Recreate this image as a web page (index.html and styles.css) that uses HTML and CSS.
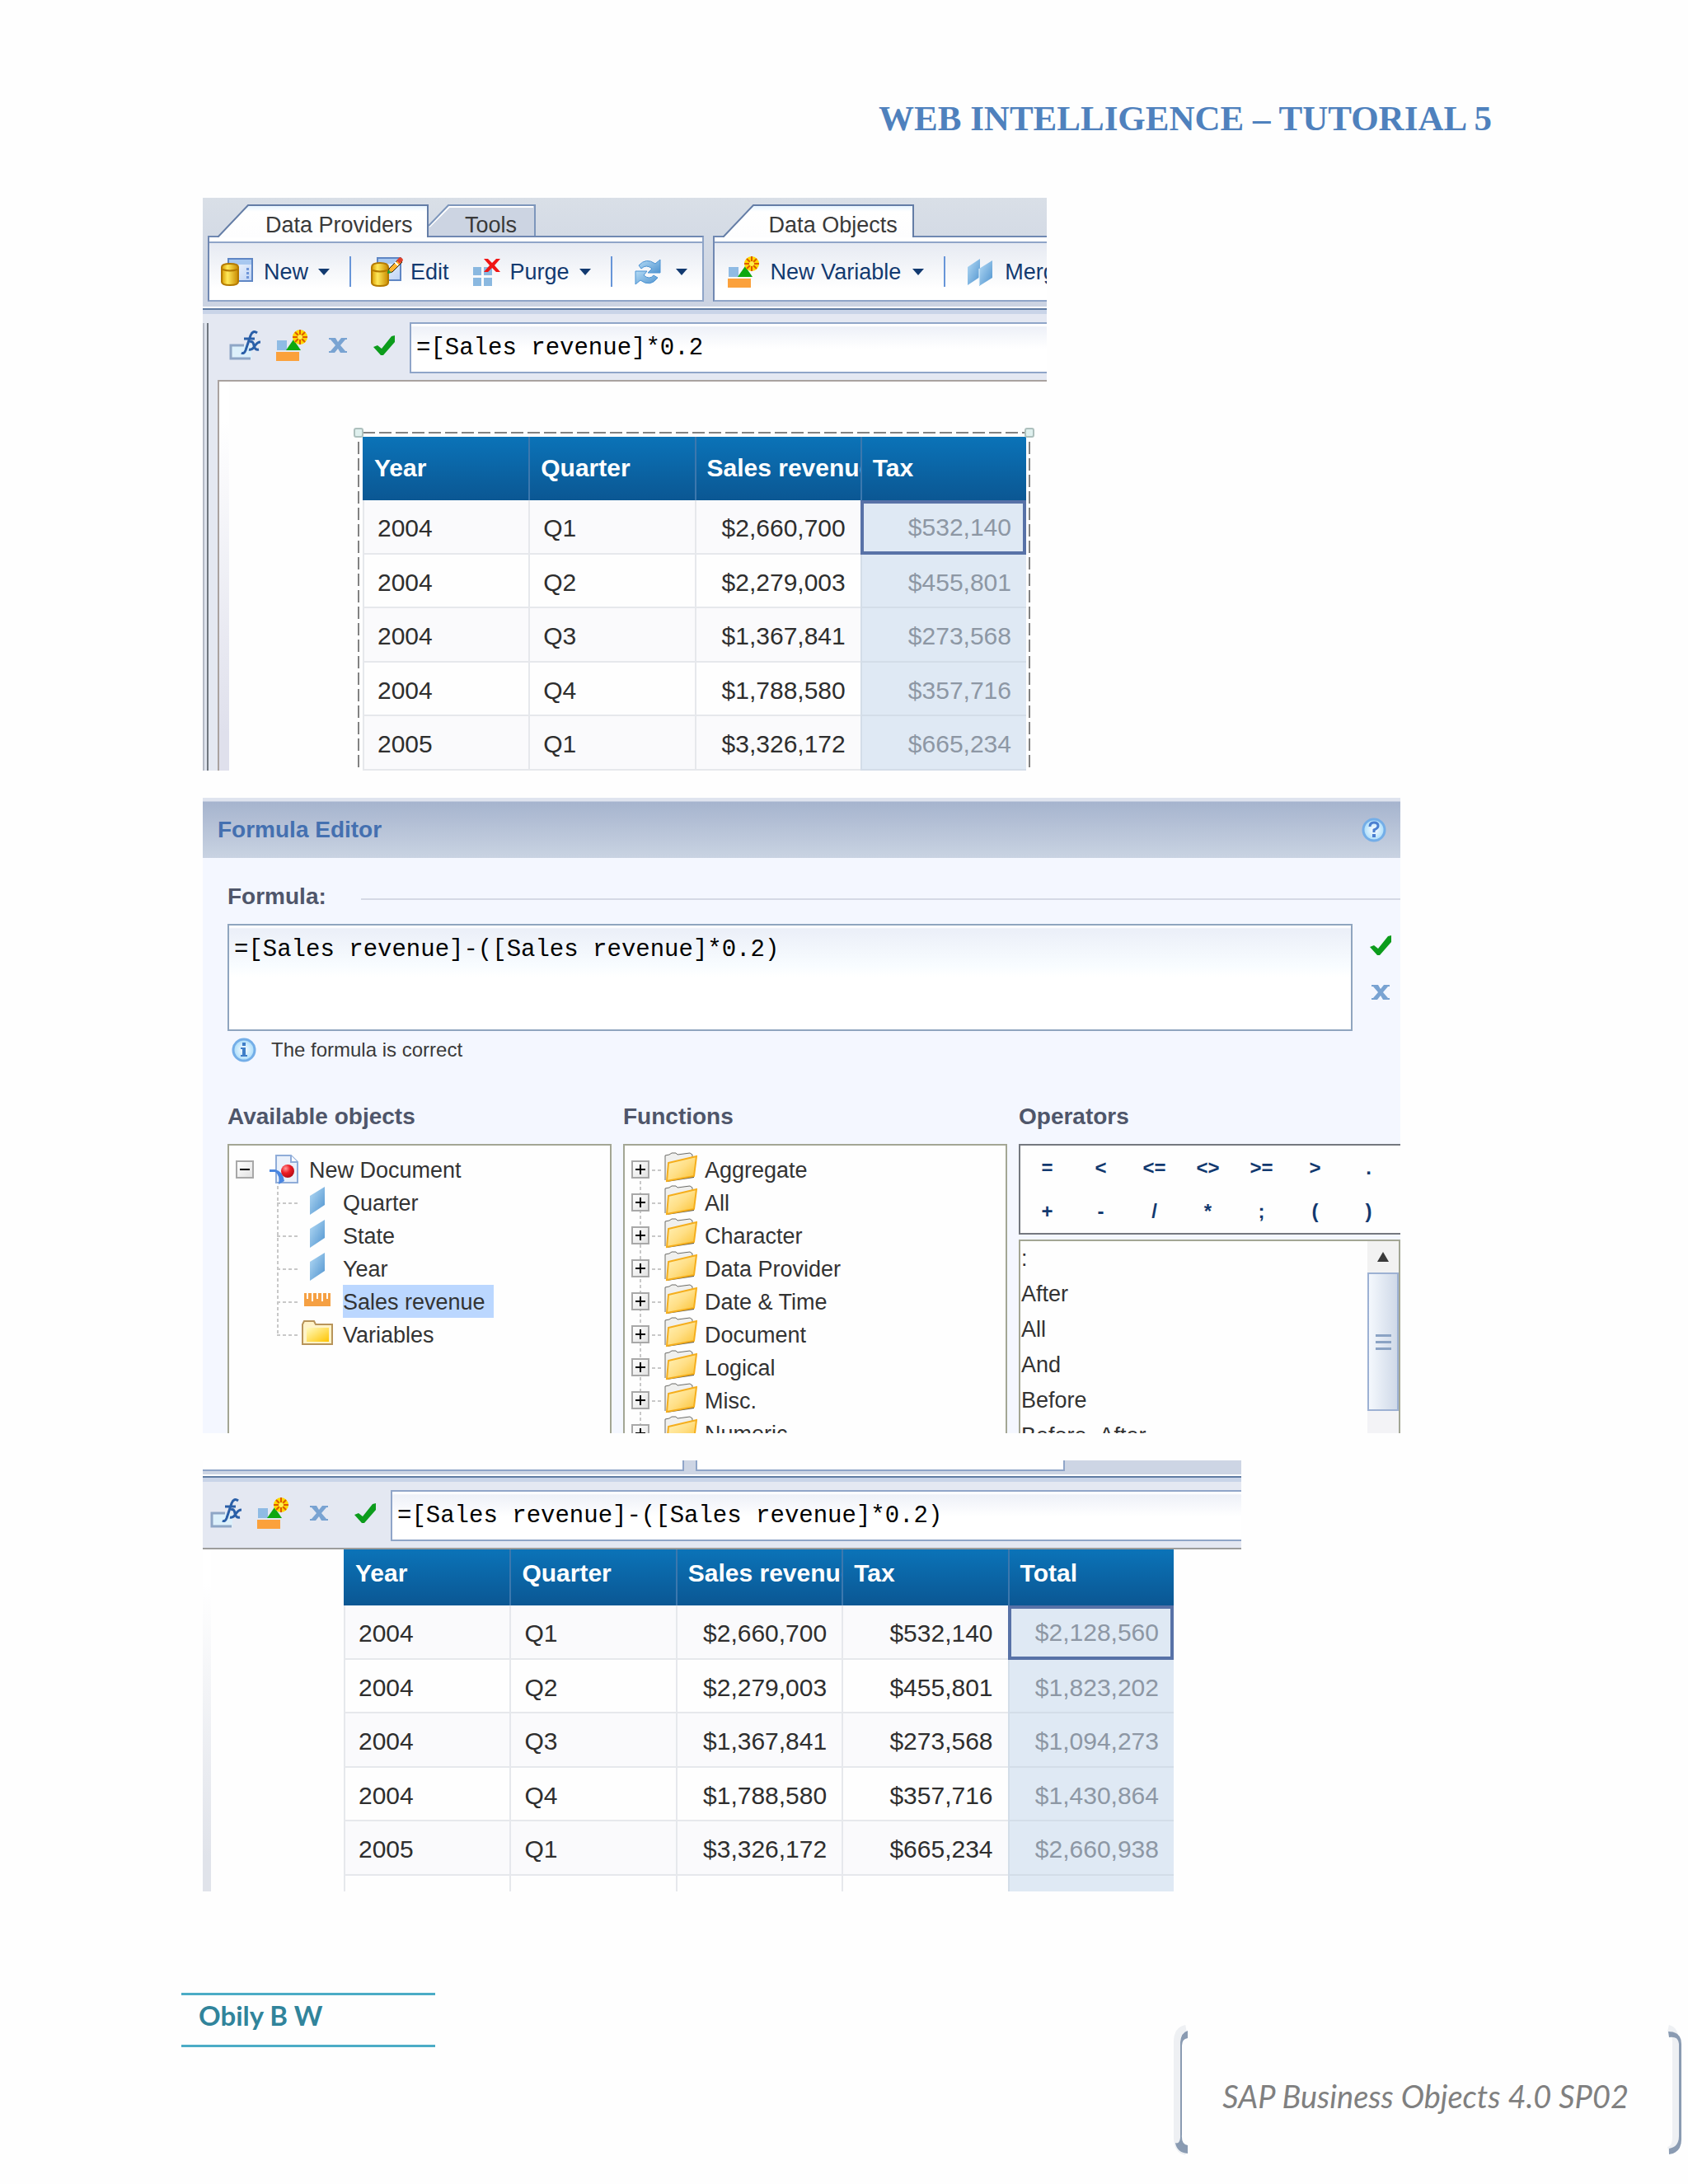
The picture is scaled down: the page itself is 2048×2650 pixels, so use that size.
FILE: index.html
```html
<!DOCTYPE html>
<html lang="en">
<head>
<meta charset="utf-8">
<title>Web Intelligence – Tutorial 5</title>
<link rel="stylesheet" href="styles.css">
</head>
<body>
<svg class="defs" aria-hidden="true">
  <defs>
    <linearGradient id="gold" x1="0" x2="1" y1="0" y2="0"><stop offset="0" stop-color="#d99a00"/><stop offset=".35" stop-color="#ffe95a"/><stop offset="1" stop-color="#c98a00"/></linearGradient>
    <linearGradient id="blue" x1="0" x2="1" y1="0" y2="1"><stop offset="0" stop-color="#b5dbf5"/><stop offset="1" stop-color="#4f93cf"/></linearGradient>
    <linearGradient id="folder" x1="0" x2="1" y1="0" y2="1"><stop offset="0" stop-color="#fff3bd"/><stop offset=".5" stop-color="#ffdf86"/><stop offset="1" stop-color="#fbc02c"/></linearGradient>
    <linearGradient id="yellow" x1="0" x2="1" y1="0" y2="1"><stop offset="0" stop-color="#fffbc0"/><stop offset="1" stop-color="#ffc400"/></linearGradient>
    <linearGradient id="window" x1="0" x2="1" y1="0" y2="1"><stop offset="0" stop-color="#fff"/><stop offset="1" stop-color="#bcd2f5"/></linearGradient>
    <radialGradient id="ball" cx=".35" cy=".3" r=".7"><stop offset="0" stop-color="#ff9a9a"/><stop offset=".5" stop-color="#ee1c24"/><stop offset="1" stop-color="#b80d16"/></radialGradient>
    <radialGradient id="badge"><stop offset="0" stop-color="#fff"/><stop offset="1" stop-color="#a8dcfa"/></radialGradient>
    <linearGradient id="tab-on" x1="0" x2="0" y1="0" y2="1"><stop offset="0" stop-color="#e4f3ff"/><stop offset=".2" stop-color="#fff"/><stop offset="1" stop-color="#fdfdfe"/></linearGradient>
  </defs>
  <symbol id="i-new" viewBox="0 0 40 36">
    <rect x="9" y="2" width="29" height="27" fill="url(#window)" stroke="#5f86c4" stroke-width="2"/>
    <rect x="10" y="3" width="27" height="6" fill="#a8c8f0"/>
    <path d="M31 13h3v3h-3zM31 18h3v3h-3zM31 23h3v3h-3z" fill="#6f95d8"/>
    <path d="M1 12q0-4 10-4t10 4v18q0 4-10 4T1 30z" fill="url(#gold)" stroke="#b47a00" stroke-width="2"/>
    <path d="M2 15q9 3 18 0" fill="none" stroke="#b47a00" stroke-width="2"/>
  </symbol>
  <symbol id="i-edit" viewBox="0 0 40 38">
    <rect x="8" y="2" width="28" height="27" fill="url(#window)" stroke="#5f86c4" stroke-width="2"/>
    <rect x="9" y="3" width="26" height="6" fill="#a8c8f0"/>
    <path d="M1 13q0-5 10-5t10 5v19q0 4-10 4T1 32z" fill="url(#gold)" stroke="#b47a00" stroke-width="2"/>
    <path d="M2 17q9 3 18 0" fill="none" stroke="#b47a00" stroke-width="2"/>
    <path d="M21 20l1-5L34 3l4 4-12 12z" fill="#ffb52e" stroke="#2c2417" stroke-width="1"/>
    <path d="M31 5l4-4q4 1 4 4l-4 4z" fill="#e0402a"/><path d="M29 7l4 4" stroke="#fff" stroke-width="2"/>
    <path d="M20 21l1-5 4 4z" fill="#1ca33b"/>
  </symbol>
  <symbol id="i-purge" viewBox="0 0 38 36">
    <path d="M5 12h10v10H5zM18 12h10v10H18zM5 25h10v10H5zM18 25h10v10H18z" fill="#8ab8e0"/>
    <path d="M18 2h5l5 5 5-5h5l-7 8 7 8h-5l-5-5-5 5h-5l7-8z" fill="#f01414"/>
  </symbol>
  <symbol id="i-refresh" viewBox="0 0 41 34">
    <path d="M8 9q9-10 20-2l6-5v16H19l5-5q-7-6-13 0z" fill="url(#blue)" stroke="#4d94d4"/>
    <path d="M31 24q-9 12-21 3l-6 5V16h14l-4 5q7 6 12 0z" fill="url(#blue)" stroke="#4d94d4"/>
  </symbol>
  <symbol id="i-variable" viewBox="0 0 38 38">
    <rect x="1" y="13" width="12" height="12" fill="#8fbbe4"/>
    <path d="M12 25l9-13 9 13z" fill="#0fa80f"/>
    <rect x="0" y="27" width="28" height="11" fill="#fba13c"/>
    <circle cx="29" cy="9" r="9" fill="#ffd800"/>
    <path d="M29 0v18M20 9h18M23 3l12 12M35 3L23 15" stroke="#dd5a00" stroke-width="2"/>
    <circle cx="29" cy="9" r="3" fill="#fff04a"/>
  </symbol>
  <symbol id="i-merge" viewBox="0 0 34 36">
    <path d="M3 12L18 2v22L3 34z" fill="url(#blue)"/><path d="M17 14L33 4v21L17 35z" fill="url(#blue)"/>
    <path d="M17 14v20" stroke="#e8f4fc" stroke-width="1"/>
  </symbol>
  <symbol id="i-fx" viewBox="0 0 40 36">
    <rect x="1" y="18" width="26" height="17" fill="#dcf0fb"/>
    <path d="M18 18H2v16h24" fill="none" stroke="#8ea6c6" stroke-width="3"/>
    <path d="M34 3q-5-4-8 3l-6 18q-2 5-5 3M18 10h13" fill="none" stroke="#2a5fa8" stroke-width="3"/>
    <path d="M25 14q4-2 5 4t6 5M38 14q-4 0-7 5t-7 4" fill="none" stroke="#2a5fa8" stroke-width="3"/>
  </symbol>
  <symbol id="i-cancel" viewBox="0 0 24 20">
    <path d="M1 1h8l3 5 4-5h7v2h-2l-6 7 6 7h2v2h-8l-3-5-4 5H1v-2h2l6-7-6-7H1z" fill="#79a3d2"/>
  </symbol>
  <symbol id="i-check" viewBox="0 0 26 26">
    <path d="M0 15l5-2 5 4L22 2l4-1v8L12 25H9z" fill="#0c9c1c"/>
  </symbol>
  <symbol id="i-badge-help" viewBox="0 0 30 30">
    <circle cx="15" cy="15" r="13" fill="url(#badge)" stroke="#74aee8" stroke-width="3"/>
    <path d="M10 11q0-5 5-5t5 4q0 3-5 5v3" fill="none" stroke="#4a7fd0" stroke-width="3"/><path d="M13 20h4v4h-4z" fill="#4a7fd0"/>
  </symbol>
  <symbol id="i-badge-info" viewBox="0 0 30 30">
    <circle cx="15" cy="15" r="13" fill="url(#badge)" stroke="#74aee8" stroke-width="3"/>
    <path d="M13 6h4v4h-4zM11 12h6v9h2v2h-8v-2h2v-7h-2z" fill="#3f7fc8"/>
  </symbol>
  <symbol id="i-doc" viewBox="0 0 36 36">
    <path d="M8 1h18l8 8v25H8z" fill="#eaf1fb" stroke="#8facd8" stroke-width="2"/><path d="M26 1v8h8" fill="#fff" stroke="#8facd8" stroke-width="2"/>
    <path d="M0 18h7q9 2 11 14l-7 4q2-11-4-15H0z" fill="#4a86e0"/>
    <circle cx="22" cy="20" r="8" fill="url(#ball)"/>
  </symbol>
  <symbol id="i-dimension" viewBox="0 0 18 34"><path d="M0 11L18 0v22L0 34z" fill="url(#blue)"/></symbol>
  <symbol id="i-measure" viewBox="0 0 32 16">
    <path d="M0 0h32v16H0z" fill="#f5a043"/><path d="M4 0v7M10 0v10M16 0v7M22 0v10M28 0v7" stroke="#fff" stroke-width="2"/>
  </symbol>
  <symbol id="i-folder" viewBox="0 0 38 30">
    <path d="M1 29V5l2-4h12l2 4h20v24z" fill="#fff3c8" stroke="#b8945a" stroke-width="2"/><path d="M6 9h27v17H6z" fill="url(#yellow)"/>
  </symbol>
  <symbol id="i-folder-open" viewBox="0 0 40 38">
    <path d="M1 34V4l5-1 3-2h5l2 2 15-2 3 2v6" fill="#f0f0ee" stroke="#6c6c68" stroke-width="1"/>
    <path d="M3 36l33-5v-3L4 34z" fill="#5f5a4c"/>
    <path d="M5 13L39 5l-3 24L3 35z" fill="url(#folder)" stroke="#f5ae1c" stroke-width="2"/>
  </symbol>
  <symbol id="i-caret" viewBox="0 0 14 8"><path d="M0 0h14L7 8z" fill="#123a70"/></symbol>
</svg>

<header class="page-head"><h1>WEB INTELLIGENCE – TUTORIAL 5</h1></header>

<main class="figures">
  <section class="shot shot-report" aria-label="Tax column">
    <div class="ribbon">
      <div class="group">
        <div class="tabs">
          <button class="tab tab-wide"><svg class="tab-shape" viewBox="0 0 256 40" width="256" height="40"><path d="M0 40L37 1H255V40" fill="url(#tab-on)" stroke="#647da6" stroke-width="2"/></svg><span>Data Providers</span></button>
          <button class="tab tab-idle"><svg class="tab-shape" viewBox="0 0 130 38" width="130" height="38"><path d="M0 38V26L24 1H129V38z" fill="#ccd4e2"/><path d="M1 27L25 3H127" fill="none" stroke="#fff" stroke-width="2"/><path d="M0 26L24 1H129V38" fill="none" stroke="#7d96bb" stroke-width="2"/></svg><span>Tools</span></button>
        </div>
        <div class="group-frame"><div class="toolbar">
          <button class="tool"><svg width="40" height="36"><use href="#i-new"/></svg>New<svg width="14" height="8"><use href="#i-caret"/></svg></button>
          <span class="sep"></span>
          <button class="tool"><svg width="36" height="38" class="spill"><use href="#i-edit" width="40" height="38"/></svg>Edit</button>
          <button class="tool"><svg width="38" height="36"><use href="#i-purge"/></svg>Purge<svg width="14" height="8"><use href="#i-caret"/></svg></button>
          <span class="sep"></span>
          <button class="tool" aria-label="Refresh"><svg width="41" height="34"><use href="#i-refresh"/></svg><svg width="14" height="8"><use href="#i-caret"/></svg></button>
        </div></div>
      </div>
      <div class="group group-rest">
        <div class="tabs">
          <button class="tab tab-objects"><svg class="tab-shape" viewBox="0 0 232 40" width="232" height="40"><path d="M0 40L37 1H231V40" fill="url(#tab-on)" stroke="#647da6" stroke-width="2"/></svg><span>Data Objects</span></button>
        </div>
        <div class="group-frame"><div class="toolbar">
          <button class="tool"><svg width="38" height="38"><use href="#i-variable"/></svg>New Variable<svg width="14" height="8"><use href="#i-caret"/></svg></button>
          <span class="sep"></span>
          <button class="tool"><svg width="34" height="36"><use href="#i-merge"/></svg>Merge</button>
        </div></div>
      </div>
    </div>
    <div class="rule"></div>
    <div class="pane">
      <div class="gutter"></div>
      <div class="pane-main">
        <div class="formula-bar">
          <button class="icon-btn" aria-label="Formula editor"><svg width="40" height="36"><use href="#i-fx"/></svg></button>
          <button class="icon-btn" aria-label="Create variable"><svg width="38" height="38"><use href="#i-variable"/></svg></button>
          <button class="icon-btn" aria-label="Cancel"><svg width="24" height="20"><use href="#i-cancel"/></svg></button>
          <button class="icon-btn" aria-label="Validate"><svg width="26" height="26"><use href="#i-check"/></svg></button>
          <input class="formula-input" aria-label="Formula" value="=[Sales revenue]*0.2">
        </div>
        <div class="workspace">
          <div class="selection">
            <span class="handle handle-left"></span><span class="handle handle-right"></span>
            <table class="report">
              <thead><tr><th>Year</th><th>Quarter</th><th>Sales revenue</th><th>Tax</th></tr></thead>
              <tbody>
                <tr><td>2004</td><td>Q1</td><td class="num">$2,660,700</td><td class="num picked focus">$532,140</td></tr>
                <tr><td>2004</td><td>Q2</td><td class="num">$2,279,003</td><td class="num picked">$455,801</td></tr>
                <tr><td>2004</td><td>Q3</td><td class="num">$1,367,841</td><td class="num picked">$273,568</td></tr>
                <tr><td>2004</td><td>Q4</td><td class="num">$1,788,580</td><td class="num picked">$357,716</td></tr>
                <tr><td>2005</td><td>Q1</td><td class="num">$3,326,172</td><td class="num picked">$665,234</td></tr>
              </tbody>
            </table>
          </div>
        </div>
      </div>
    </div>
  </section>

  <section class="shot shot-editor" aria-label="Formula Editor">
    <div class="titlebar"><h2>Formula Editor</h2><button class="plain" aria-label="Help"><svg width="30" height="30"><use href="#i-badge-help"/></svg></button></div>
    <div class="editor">
      <div class="legend"><label for="formula">Formula:</label><span class="legend-line"></span></div>
      <div class="formula-row">
        <textarea id="formula" class="formula-area">=[Sales revenue]-([Sales revenue]*0.2)</textarea>
        <div class="formula-actions">
          <button class="plain" aria-label="Accept"><svg width="26" height="26"><use href="#i-check"/></svg></button>
          <button class="plain" aria-label="Clear"><svg width="24" height="20"><use href="#i-cancel"/></svg></button>
        </div>
      </div>
      <p class="status"><svg width="30" height="30"><use href="#i-badge-info"/></svg>The formula is correct</p>
      <div class="columns">
        <div class="column">
          <h3>Available objects</h3>
          <div class="box">
            <div class="node"><button class="toggle minus" aria-label="Collapse"></button><svg class="doc" width="36" height="36"><use href="#i-doc"/></svg><span>New Document</span></div>
            <ul class="branch">
              <li><i><svg width="18" height="34"><use href="#i-dimension"/></svg></i><span>Quarter</span></li>
              <li><i><svg width="18" height="34"><use href="#i-dimension"/></svg></i><span>State</span></li>
              <li><i><svg width="18" height="34"><use href="#i-dimension"/></svg></i><span>Year</span></li>
              <li><i><svg width="32" height="16"><use href="#i-measure"/></svg></i><span class="chosen">Sales revenue</span></li>
              <li><i><svg width="38" height="30"><use href="#i-folder"/></svg></i><span>Variables</span></li>
            </ul>
          </div>
        </div>
        <div class="column">
          <h3>Functions</h3>
          <div class="box">
            <ul class="functions">
              <li><button class="toggle" aria-label="Expand"></button><svg width="40" height="38"><use href="#i-folder-open"/></svg><span>Aggregate</span></li>
              <li><button class="toggle" aria-label="Expand"></button><svg width="40" height="38"><use href="#i-folder-open"/></svg><span>All</span></li>
              <li><button class="toggle" aria-label="Expand"></button><svg width="40" height="38"><use href="#i-folder-open"/></svg><span>Character</span></li>
              <li><button class="toggle" aria-label="Expand"></button><svg width="40" height="38"><use href="#i-folder-open"/></svg><span>Data Provider</span></li>
              <li><button class="toggle" aria-label="Expand"></button><svg width="40" height="38"><use href="#i-folder-open"/></svg><span>Date &amp; Time</span></li>
              <li><button class="toggle" aria-label="Expand"></button><svg width="40" height="38"><use href="#i-folder-open"/></svg><span>Document</span></li>
              <li><button class="toggle" aria-label="Expand"></button><svg width="40" height="38"><use href="#i-folder-open"/></svg><span>Logical</span></li>
              <li><button class="toggle" aria-label="Expand"></button><svg width="40" height="38"><use href="#i-folder-open"/></svg><span>Misc.</span></li>
              <li><button class="toggle" aria-label="Expand"></button><svg width="40" height="38"><use href="#i-folder-open"/></svg><span>Numeric</span></li>
            </ul>
          </div>
        </div>
        <div class="column column-ops">
          <h3>Operators</h3>
          <div class="ops">
            <button>=</button><button>&lt;</button><button>&lt;=</button><button>&lt;&gt;</button><button>&gt;=</button><button>&gt;</button><button>.</button>
            <button>+</button><button>-</button><button>/</button><button>*</button><button>;</button><button>(</button><button>)</button>
          </div>
          <div class="op-box">
            <ul class="op-list"><li>:</li><li>After</li><li>All</li><li>And</li><li>Before</li><li>Before_After</li></ul>
            <div class="scroll">
              <button class="scroll-up" aria-label="Scroll up"><svg width="14" height="12" viewBox="0 0 14 12"><path d="M7 0l7 12H0z" fill="#3a3a3a"/></svg></button>
              <div class="thumb"><i></i><i></i><i></i></div>
            </div>
          </div>
        </div>
      </div>
    </div>
  </section>

  <section class="shot shot-total" aria-label="Total column">
    <div class="strip"><span class="strip-a"></span><span class="strip-b"></span></div>
    <div class="rule"></div>
    <div class="formula-bar formula-bar-wide">
      <button class="icon-btn" aria-label="Formula editor"><svg width="40" height="36"><use href="#i-fx"/></svg></button>
      <button class="icon-btn" aria-label="Create variable"><svg width="38" height="38"><use href="#i-variable"/></svg></button>
      <button class="icon-btn" aria-label="Cancel"><svg width="24" height="20"><use href="#i-cancel"/></svg></button>
      <button class="icon-btn" aria-label="Validate"><svg width="26" height="26"><use href="#i-check"/></svg></button>
      <input class="formula-input" aria-label="Formula" value="=[Sales revenue]-([Sales revenue]*0.2)">
    </div>
    <div class="workspace-total">
      <table class="report report-total">
        <thead><tr><th>Year</th><th>Quarter</th><th>Sales revenue</th><th>Tax</th><th>Total</th></tr></thead>
        <tbody>
          <tr><td>2004</td><td>Q1</td><td class="num">$2,660,700</td><td class="num">$532,140</td><td class="num picked focus">$2,128,560</td></tr>
          <tr><td>2004</td><td>Q2</td><td class="num">$2,279,003</td><td class="num">$455,801</td><td class="num picked">$1,823,202</td></tr>
          <tr><td>2004</td><td>Q3</td><td class="num">$1,367,841</td><td class="num">$273,568</td><td class="num picked">$1,094,273</td></tr>
          <tr><td>2004</td><td>Q4</td><td class="num">$1,788,580</td><td class="num">$357,716</td><td class="num picked">$1,430,864</td></tr>
          <tr><td>2005</td><td>Q1</td><td class="num">$3,326,172</td><td class="num">$665,234</td><td class="num picked">$2,660,938</td></tr>
          <tr class="stub"><td></td><td></td><td></td><td></td><td class="picked"></td></tr>
        </tbody>
      </table>
    </div>
  </section>
</main>

<footer class="page-foot">
  <p class="author">Obily B W</p>
  <div class="bracket">
    <svg width="20" height="160" viewBox="0 0 20 160"><path d="M17 5Q6 7 6 22V138Q6 153 17 155" fill="none" stroke="#eef0f3" stroke-width="8"/><path d="M19 8V17Q12 18 12 26V134Q11 146 19 147V157Q6 156 4 144Q9 146 10 138V22Q11 10 19 8z" fill="#8a9bb2"/></svg>
    <p>SAP Business Objects 4.0 SP02</p>
    <svg width="20" height="160" viewBox="0 0 20 160"><path d="M2 5Q11 7 11 22V138Q11 151 2 153" fill="none" stroke="#eef0f3" stroke-width="8"/><path d="M2 9Q18 9 18 24V140Q18 156 3 158V151Q15 149 15 136V24Q14 14 3 16z" fill="#8a9bb2"/></svg>
  </div>
</footer>
</body>
</html>
```

FILE: styles.css
```css
* { box-sizing: border-box; }
body { margin: 0; background: #fefefe; font-family: "Liberation Sans", Arial, sans-serif; font-size: 27px; color: #333; }
h1, h2, h3, p, ul { margin: 0; padding: 0; }
ul { list-style: none; }
button { font: inherit; color: inherit; background: none; border: 0; padding: 0; }
svg { display: block; flex: none; }
.defs { position: absolute; width: 0; height: 0; }

.page-head { padding: 120px 238px 0 0; text-align: right; }
.page-head h1 { font: bold 43px/48px "Liberation Serif", "Times New Roman", serif; color: #4f81bd; }

.figures { display: flex; flex-direction: column; gap: 33px; padding: 72px 40px 0 246px; }
.shot { width: 100%; overflow: hidden; }
.shot-report { max-width: 1024px; background: #e4e8f1; }
.shot-editor { max-width: 1453px; background: #f4f7ff; }
.shot-total { max-width: 1260px; }

/* Ribbon */
.ribbon { display: flex; gap: 11px; padding: 8px 0 6px 6px; background: linear-gradient(#d9dfe7, #cbd3e2); }
.group { flex: none; }
.group-rest { flex: 1; min-width: 0; }
.tabs { display: flex; padding-left: 12px; height: 38px; }
.tab { position: relative; height: 40px; text-align: left; color: #3a3a3a; }
.tab span { position: relative; line-height: 50px; }
.tab-wide { width: 256px; padding-left: 58px; z-index: 1; }
.tab-idle { width: 130px; height: 38px; padding-left: 44px; }
.tab-objects { width: 232px; padding-left: 56px; z-index: 1; }
.tab-shape { position: absolute; left: 0; top: 0; }
.group-frame { border: 2px solid #7088b2; border-bottom-color: #8fa5c8; border-right-color: #8fa5c8; padding-top: 5px; background: #fff; }
.group-rest .group-frame { border-right: 0; }
.toolbar { display: flex; align-items: center; gap: 24px; height: 71px; padding: 0 18px 0 14px; border-top: 2px solid #8fa5c8; background: linear-gradient(#e6eaf2, #fff 80%); overflow: hidden; }
.group-rest .toolbar { padding: 0 0 0 16px; }
.tool { display: flex; align-items: center; gap: 12px; flex: none; color: #123a70; line-height: 34px; }
.group-rest .tool { gap: 14px; }
.spill { overflow: visible; }
.sep { width: 2px; height: 37px; background: #6795d8; flex: none; }
.rule { height: 9px; border-top: 2px solid #fff; background: linear-gradient(#5f7ba2 2px, #c9d4e8 2px); }

/* Formula bar */
.pane { display: flex; }
.gutter { width: 7px; margin-top: 11px; border-right: 2px solid #70777f; border-left: 2px solid #b5bbc6; background: #dfe4ee; }
.pane-main { flex: 1; min-width: 0; }
.formula-bar { display: flex; align-items: center; padding: 10px 0 8px 26px; background: #e4e8f2; }
.formula-bar-wide { padding-left: 10px; border-bottom: 2px solid #9c9c9c; }
.icon-btn { display: flex; align-items: center; justify-content: center; width: 38px; margin-right: 18px; padding-bottom: 6px; flex: none; }
.icon-btn:nth-child(4) { margin-right: 12px; }
.formula-input { flex: 1; min-width: 0; height: 62px; padding: 0 0 0 6px; border: 2px solid #8fa5c8; border-right: 0; border-radius: 0; background: linear-gradient(#fff 2px, #eef1f8 4px, #fff 30px); color: #000; font: 29px "Liberation Mono", "Courier New", monospace; }

/* Reports */
.workspace { margin-left: 11px; padding: 61px 0 0 168px; border: 2px solid #a9a29f; border-width: 2px 0 0 2px; background: linear-gradient(#fff 10%, #dfe0ec 90%) 0 0 / 12px 100% no-repeat #fefefe; }
.selection { position: relative; width: 816px; padding: 6px 5px 0 6px; background:
  repeating-linear-gradient(90deg, #828282 0 15px, transparent 15px 20px) 6px 0 / 100% 2px no-repeat,
  repeating-linear-gradient(#828282 0 15px, transparent 15px 20px) 0 12px / 2px 100% no-repeat,
  repeating-linear-gradient(#828282 0 15px, transparent 15px 20px) 100% 12px / 2px 100% no-repeat; }
.handle { position: absolute; top: -5px; width: 12px; height: 12px; border: 2px solid #adc0bd; border-radius: 3px; background: #dff0ee; }
.handle-left { left: -5px; }
.handle-right { right: -5px; }
.report { table-layout: fixed; width: 805px; border-collapse: separate; border-spacing: 0; font-size: 30px; color: #2e2e2e; }
.report-total { width: 1007px; }
.report th { height: 77px; padding: 0 0 22px 13px; vertical-align: bottom; text-align: left; line-height: 34px; color: #fff; white-space: nowrap; overflow: hidden; border-left: 2px solid #3c78ae; }
.report-total th { height: 68px; }
.report thead tr { background: linear-gradient(#0b73b8, #0b5793); }
.report th:first-child { border-left-color: transparent; padding-left: 12px; }
.report td { height: 65px; padding: 4px 18px 0 16px; line-height: 34px; border: 2px solid #e6e8ec; border-width: 0 0 2px 2px; }
.report tr:nth-child(odd) td { height: 66px; background: #fafafc; }
.report .num { text-align: right; padding-left: 0; }
.report tr .picked, .report tr:nth-child(odd) .picked { background: #dfe9f4; color: #8d97a4; border-color: #d3dde8; }
.report tr .focus, .report tr:nth-child(odd) .focus { border: 4px solid #5872a7; padding: 0 14px 0 0; }
.report .stub td, .report tr.stub:nth-child(odd) td { height: 19px; padding: 0; border-bottom: 0; }
.workspace-total { padding-left: 171px; background: linear-gradient(#fff 10%, #e0e3ea 90%) 0 0 / 10px 100% no-repeat; }
.strip { display: flex; gap: 14px; height: 17px; padding-bottom: 4px; background: #cdd5e4; }
.strip span { background: #fff; border: 2px solid #8fa5c8; border-top: 0; }
.strip-a { width: 584px; }
.strip .strip-a { border-left: 0; }
.strip-b { width: 448px; }

/* Formula editor */
.titlebar { display: flex; align-items: center; justify-content: space-between; height: 73px; padding: 4px 17px 0 18px; background: linear-gradient(#dfe4ef 4px, #a6b4ce 5px, #c9d3e2); }
h2, h3, .legend { font-size: 28px; line-height: 34px; font-weight: bold; }
h2 { color: #4470b0; }
h3, .legend { color: #4f566a; }
.editor { padding: 30px 0 0 30px; }
.legend { display: flex; align-items: center; gap: 42px; }
.legend-line { flex: 1; height: 8px; border-bottom: 2px solid #d5d9e5; }
.formula-row { display: flex; margin-top: 16px; }
.formula-area { display: block; flex: 1; min-width: 0; height: 130px; padding: 13px 6px; resize: none; border: 2px solid #8fa5bf; border-radius: 0; background: linear-gradient(#fff 2px, #ebeff8 4px, #f8fcff 48px, #fff 62px); color: #000; font: 29px/34px "Liberation Mono", "Courier New", monospace; }
.formula-actions { display: flex; flex-direction: column; align-items: center; gap: 34px; width: 58px; padding: 13px 0 0 10px; }
.plain svg { display: block; }
.status { display: flex; align-items: center; gap: 18px; padding: 5px 0 0 5px; font-size: 24px; line-height: 36px; color: #3a3a3a; }
.columns { display: flex; gap: 14px; margin-top: 46px; }
.column { flex: 466 1 0; min-width: 0; }
.column-ops { flex-grow: 463; }
h3 { margin-bottom: 16px; }
.box { height: 351px; padding: 9px 8px; overflow: hidden; border: 2px solid #a3a694; border-bottom: 0; background: #fefefe; }
.node, .functions li { display: flex; align-items: center; height: 40px; }
.node span, .branch span, .functions span { padding-top: 3px; line-height: 37px; }
.toggle { position: relative; flex: none; width: 22px; height: 22px; border: 2px solid #a8a8a8; background:
  linear-gradient(#000, #000) center / 12px 2px no-repeat, linear-gradient(#000, #000) center / 2px 12px no-repeat, linear-gradient(135deg, #fff, #e2e2e2); }
.minus { background: linear-gradient(#000, #000) center / 12px 2px no-repeat, linear-gradient(135deg, #fff, #e2e2e2); }
.doc { margin: 0 12px 0 19px; }
.branch { margin-left: 50px; background: repeating-linear-gradient(#c8c8c8 0 4px, transparent 4px 7px) 0 0 / 2px 180px no-repeat; }
.branch li { display: flex; height: 40px; background: repeating-linear-gradient(90deg, #c8c8c8 0 4px, transparent 4px 7px) 0 20px / 28px 2px no-repeat; }
.branch i { display: flex; align-items: center; justify-content: center; width: 38px; margin: 0 12px 0 30px; padding-bottom: 4px; }
.branch .chosen { background: #bbd7ff; padding-right: 10px; }
.functions { background: repeating-linear-gradient(#c8c8c8 0 4px, transparent 4px 7px) 10px 20px / 2px 100% no-repeat; }
.functions li { background: repeating-linear-gradient(90deg, #c8c8c8 0 4px, transparent 4px 7px) 25px 20px / 12px 2px no-repeat; }
.functions svg { margin: 0 9px 4px 18px; }
.ops { display: grid; grid-template-columns: repeat(7, 65px); grid-auto-rows: 53px; height: 110px; overflow: hidden; border: 2px solid #74787f; border-right: 0; background: #fefefe; color: #12396f; font-size: 24px; font-weight: bold; line-height: 53px; }
.ops button { height: 53px; }
.op-box { display: flex; justify-content: space-between; height: 235px; margin-top: 6px; overflow: hidden; border: 2px solid #a3a694; border-bottom: 0; background: #fefefe; }
.op-list { padding: 0 0 0 1px; }
.op-list li { height: 43px; line-height: 43px; }
.scroll { width: 38px; background: #f3f3f6; }
.scroll-up { display: flex; align-items: center; justify-content: center; width: 38px; height: 38px; background: #f2f2f2; }
.thumb { display: flex; flex-direction: column; align-items: center; justify-content: center; gap: 5px; height: 168px; border: 2px solid #9db1d3; background: linear-gradient(90deg, #f4f8fd, #cfd9e8); }
.thumb i { width: 19px; height: 3px; background: #8ba3c4; }

/* Footer */
.page-foot { display: flex; justify-content: space-between; padding: 123px 6px 33px 220px; }
.author { width: 308px; height: 66px; padding: 4px 0 0 21px; border-top: 3px solid #4bacc6; border-bottom: 3px solid #4bacc6; font: bold 33px/40px Lato, sans-serif; color: #31849b; }
.bracket { display: flex; align-items: center; margin-top: 38px; }
.bracket p { padding: 14px 46px 0 41px; font: italic 38px/40px Lato, sans-serif; color: #808080; }
```
